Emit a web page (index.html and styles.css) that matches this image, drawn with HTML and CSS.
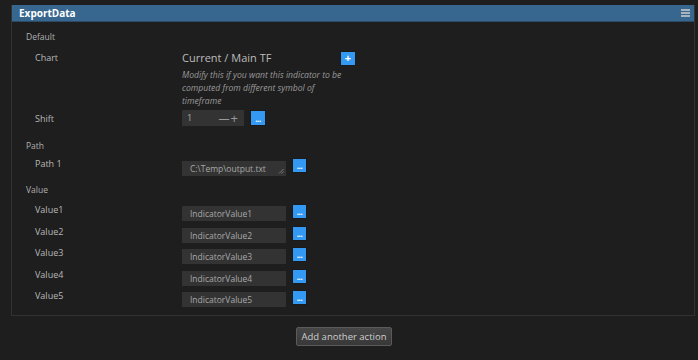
FILE: index.html
```html
<!DOCTYPE html>
<html lang="en">

<head>
    <meta charset="UTF-8">
    <meta name="viewport" content="width=device-width, initial-scale=1.0">
    <title>ExportData</title>
    <link rel="stylesheet" href="styles.css">
</head>

<body>
    <div class="panel">
        <div class="head">
            <span class="head-title">ExportData</span>
            <span class="burger"><i></i><i></i><i></i></span>
        </div>
        <div class="content">
            <div class="section">Default</div>
            <div class="row chart-row">
                <div class="label">Chart</div>
                <div class="ctrl">
                    <div class="chart-top">
                        <span class="tf">Current / Main TF</span>
                        <span class="btn plus">+</span>
                    </div>
                    <div class="hint">Modify this if you want this indicator to be computed from different symbol of timeframe</div>
                </div>
            </div>
            <div class="row shift-row">
                <div class="label">Shift</div>
                <div class="ctrl line">
                    <div class="spin">
                        <span>1</span>
                        <span class="pm"><b>&mdash;</b><b>+</b></span>
                    </div>
                    <span class="btn dots">...</span>
                </div>
            </div>

            <div class="section gap">Path</div>
            <div class="row path-row">
                <div class="label">Path 1</div>
                <div class="ctrl line">
                    <div class="field area">
                        C:\Temp\output.txt
                        <svg class="grip" width="6" height="6" viewBox="0 0 6 6">
                            <path d="M1 5.5 L5.5 1 M3.5 5.5 L5.5 3.5" stroke="#8a8a8a" stroke-width="0.8" />
                        </svg>
                    </div>
                    <span class="btn dots">...</span>
                </div>
            </div>

            <div class="section value-sec">Value</div>
            <div class="row val-row">
                <div class="label">Value1</div>
                <div class="ctrl line">
                    <div class="field">IndicatorValue1</div>
                    <span class="btn dots">...</span>
                </div>
            </div>
            <div class="row val-row">
                <div class="label">Value2</div>
                <div class="ctrl line">
                    <div class="field">IndicatorValue2</div>
                    <span class="btn dots">...</span>
                </div>
            </div>
            <div class="row val-row">
                <div class="label">Value3</div>
                <div class="ctrl line">
                    <div class="field">IndicatorValue3</div>
                    <span class="btn dots">...</span>
                </div>
            </div>
            <div class="row val-row">
                <div class="label">Value4</div>
                <div class="ctrl line">
                    <div class="field">IndicatorValue4</div>
                    <span class="btn dots">...</span>
                </div>
            </div>
            <div class="row val-row">
                <div class="label">Value5</div>
                <div class="ctrl line">
                    <div class="field">IndicatorValue5</div>
                    <span class="btn dots">...</span>
                </div>
            </div>
        </div>
    </div>

    <div class="actions">
        <span class="add">Add another action</span>
    </div>
</body>

</html>
```

FILE: styles.css
```css
body {
    margin: 0;
    padding: 0;
    background-color: #1e1e1e;
    font-family: "Open Sans", "Liberation Sans", sans-serif;
    color: #b5b5b5;
}

.panel {
    margin: 5px 3px 0 11px;
    border: 1px solid #323232;
    border-top: none;
}

.head {
    height: 16px;
    background-color: #37668e;
    border-bottom: 1px solid #2c4a63;
    display: flex;
    align-items: center;
    justify-content: space-between;
    padding: 0 4px 0 7px;
}

.head-title {
    color: #fff;
    font-weight: bold;
    font-size: 10px;
    line-height: 16px;
}

.burger {
    display: flex;
    flex-direction: column;
    gap: 1.5px;
    width: 9px;
}

.burger i {
    display: block;
    height: 1.5px;
    background-color: #a7b3bd;
}

.content {
    padding: 8px 0 8px 14px;
}

.section {
    font-size: 8.5px;
    line-height: 14px;
    height: 14px;
    color: #b0b0b0;
}

.section.gap {
    margin-top: 12px;
}

.section.value-sec {
    margin-top: 7px;
}

.row {
    display: grid;
    grid-template-columns: 147px 1fr;
    padding-left: 9px;
}

.label {
    font-size: 9px;
    line-height: 16px;
    color: #b8b8b8;
}

.chart-row {
    margin-top: 5px;
}

.chart-row .label {
    line-height: 17px;
}

.chart-top {
    width: 174px;
    display: flex;
    justify-content: space-between;
    align-items: flex-start;
}

.tf {
    font-size: 11px;
    line-height: 18px;
    color: #bcbcbc;
}

.btn {
    display: inline-block;
    background-color: #3399f3;
    border: 1px solid #1a1a1a;
    box-sizing: border-box;
    color: #fff;
    text-align: center;
}

.plus {
    width: 16px;
    height: 15px;
    margin-top: 2px;
    font-size: 11px;
    font-weight: bold;
    line-height: 12px;
}

.dots {
    width: 15px;
    height: 15px;
    font-size: 8px;
    font-weight: bold;
    line-height: 14px;
    letter-spacing: -0.5px;
}

.hint {
    width: 163px;
    margin-top: 2px;
    font-size: 8.6px;
    font-style: italic;
    line-height: 13px;
    color: #9a9a9a;
}

.line {
    display: flex;
    align-items: flex-start;
    gap: 6px;
}

.shift-row {
    margin-top: 2px;
}

.shift-row .label {
    line-height: 17px;
}

.spin {
    width: 62px;
    height: 16px;
    background-color: #333;
    display: flex;
    justify-content: space-between;
    padding: 0 6px 0 5px;
    box-sizing: border-box;
    font-size: 9px;
    line-height: 16px;
    color: #aaa;
}

.pm {
    display: flex;
    gap: 1px;
}

.pm b {
    font-size: 11px;
    font-weight: normal;
    line-height: 16px;
    color: #9a9a9a;
}

.pm b + b {
    font-size: 13px;
}

.shift-row .dots {
    width: 16px;
    height: 16px;
    line-height: 15px;
}

.path-row {
    margin-top: 2px;
}

.path-row .label {
    line-height: 18px;
}

.path-row .ctrl {
    padding-top: 3px;
}

.field {
    width: 104px;
    height: 15px;
    background-color: #333;
    box-sizing: border-box;
    padding-left: 8px;
    margin-top: 2px;
    font-size: 8.5px;
    line-height: 15px;
    color: #a8a8a8;
    position: relative;
}

.area {
    margin-top: 3px;
}

.grip {
    position: absolute;
    right: 2px;
    bottom: 2px;
}

.val-row {
    margin-top: 2.5px;
}

.val-row .ctrl {
    padding-top: 2px;
}

.value-sec + .val-row {
    margin-top: 5px;
}

.actions {
    display: flex;
    margin: 11px 0 0 296px;
}

.add {
    width: 96px;
    height: 19px;
    box-sizing: border-box;
    border: 1px solid #5a5a5a;
    border-radius: 2px;
    background: linear-gradient(#474747, #383838);
    color: #cfcfcf;
    font-size: 9.5px;
    line-height: 17px;
    text-align: center;
}
```
